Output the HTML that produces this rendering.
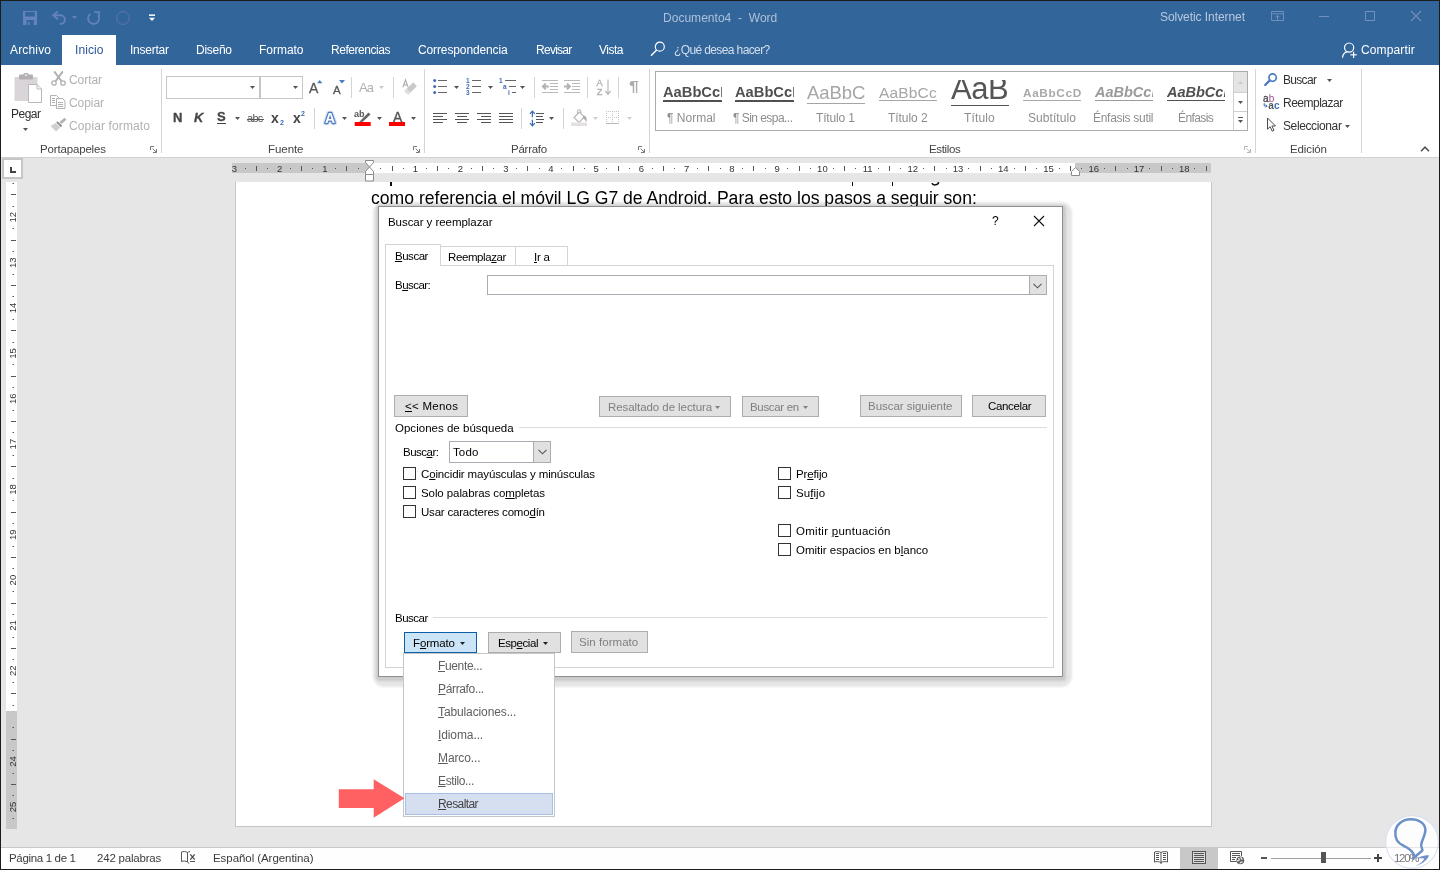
<!DOCTYPE html>
<html><head><meta charset="utf-8"><title>Documento4 - Word</title>
<style>
html,body{margin:0;padding:0;}
body{width:1440px;height:870px;overflow:hidden;position:relative;background:#e6e6e6;font-family:"Liberation Sans",sans-serif;}
.a{position:absolute;display:block;}
.t{position:absolute;white-space:pre;display:block;will-change:transform;}
u{text-decoration:underline;text-underline-offset:1px;text-decoration-thickness:1px;}
svg{overflow:visible;will-change:transform;}
</style></head><body>
<div class="a" style="left:0px;top:0px;width:1440px;height:870px;background:#e6e6e6;"></div>
<div class="a" style="left:0px;top:0px;width:1440px;height:65px;background:#32659a;"></div>
<div class="a" style="left:0px;top:65px;width:1440px;height:92px;background:#fff;"></div>
<div class="a" style="left:0px;top:157px;width:1440px;height:1px;background:#d2d2d2;"></div>
<div class="a" style="left:62px;top:35px;width:54px;height:30px;background:#fff;"></div>
<svg class="a" style="left:23px;top:11px;" width="14" height="14" viewBox="0 0 14 14"><path fill-rule="evenodd" d="M0.6 0 H13.4 Q14 0 14 0.6 V13.4 Q14 14 13.4 14 H0.6 Q0 14 0 13.4 V0.6 Q0 0 0.6 0 Z M2.2 1 V5.6 H11.8 V1 Z M3.6 9 V14 H10.8 V9 Z" fill="#6482bc"/><rect x="5" y="11" width="1.6" height="3" fill="#6482bc"/></svg>
<svg class="a" style="left:52px;top:11px;" width="15" height="14" viewBox="0 0 15 14"><path d="M2 4.3 H8.6 A4.3 4.3 0 0 1 8.6 12.9 H7.6" fill="none" stroke="#6482bc" stroke-width="1.9"/><path d="M5.9 0.4 L1.2 4.3 L5.9 8.2" fill="none" stroke="#6482bc" stroke-width="1.9"/></svg>
<svg class="a" style="left:71.0px;top:15.0px;" width="7" height="5" viewBox="0 0 7 5"><path d="M1 1 L6 1 L3.5 4 Z" fill="#6482bc"/></svg>
<svg class="a" style="left:87px;top:11px;" width="14" height="14" viewBox="0 0 14 14"><path d="M3.4 2.9 A5.5 5.5 0 1 0 11.2 4.4" fill="none" stroke="#6482bc" stroke-width="1.8"/><path d="M7.2 1.2 H12 V5.8" fill="none" stroke="#6482bc" stroke-width="1.8"/></svg>
<svg class="a" style="left:116px;top:11px;" width="14" height="14" viewBox="0 0 14 14"><circle cx="7" cy="7" r="6.4" fill="none" stroke="#6475b8" stroke-width="0.9"/></svg>
<svg class="a" style="left:148.5px;top:14px;" width="6" height="8" viewBox="0 0 6 8"><rect x="0" y="0.4" width="6" height="1.5" fill="#fff"/><path d="M0 3.7 H6 L3 7 Z" fill="#fff"/></svg>
<span class="t" style="left:662.50px;top:10.34px;font-size:12px;line-height:17px;color:#aec0d9;letter-spacing:0.026px;">Documento4  -  Word</span>
<span class="t" style="left:1160.00px;top:9.34px;font-size:12px;line-height:17px;color:#b9c9de;letter-spacing:-0.065px;">Solvetic Internet</span>
<svg class="a" style="left:1271px;top:11px;" width="13" height="10" viewBox="0 0 13 10"><path d="M0.5 0.5 H12.5 V9.5 H0.5 Z M0.5 2.8 H12.5" fill="none" stroke="#6f8fbc" stroke-width="1"/><path d="M6.5 9.5 V4.3 M4.5 6.3 L6.5 4.3 L8.5 6.3" fill="none" stroke="#6f8fbc" stroke-width="1"/></svg>
<div class="a" style="left:1319px;top:16px;width:10px;height:1px;background:#6f8fbc;"></div>
<div class="a" style="left:1365px;top:11px;width:10px;height:10px;border:1px solid #6f8fbc;box-sizing:border-box;"></div>
<svg class="a" style="left:1411px;top:11px;" width="10" height="10" viewBox="0 0 10 10"><path d="M0 0 L10 10 M10 0 L0 10" stroke="#6f8fbc" stroke-width="1.1"/></svg>
<span class="t" style="left:10.00px;top:42.34px;font-size:12px;line-height:17px;color:#fff;letter-spacing:0.164px;">Archivo</span>
<span class="t" style="left:74.50px;top:42.34px;font-size:12px;line-height:17px;color:#2b579a;letter-spacing:0.097px;">Inicio</span>
<span class="t" style="left:130.00px;top:42.34px;font-size:12px;line-height:17px;color:#fff;letter-spacing:-0.240px;">Insertar</span>
<span class="t" style="left:196.00px;top:42.34px;font-size:12px;line-height:17px;color:#fff;letter-spacing:-0.271px;">Diseño</span>
<span class="t" style="left:259.30px;top:42.34px;font-size:12px;line-height:17px;color:#fff;letter-spacing:-0.030px;">Formato</span>
<span class="t" style="left:331.30px;top:42.34px;font-size:12px;line-height:17px;color:#fff;letter-spacing:-0.453px;">Referencias</span>
<span class="t" style="left:418.30px;top:42.34px;font-size:12px;line-height:17px;color:#fff;letter-spacing:-0.121px;">Correspondencia</span>
<span class="t" style="left:535.50px;top:42.34px;font-size:12px;line-height:17px;color:#fff;letter-spacing:-0.729px;">Revisar</span>
<span class="t" style="left:599.30px;top:42.34px;font-size:12px;line-height:17px;color:#fff;letter-spacing:-0.490px;">Vista</span>
<svg class="a" style="left:650px;top:42px;" width="16" height="14" viewBox="0 0 16 14"><circle cx="9.8" cy="4.7" r="4.5" fill="none" stroke="#fff" stroke-width="1.2"/><path d="M6.6 8 L1 13.8" stroke="#fff" stroke-width="1.4"/></svg>
<span class="t" style="left:673.80px;top:42.34px;font-size:12px;line-height:17px;color:#d5dfee;letter-spacing:-0.617px;">¿Qué desea hacer?</span>
<svg class="a" style="left:1342px;top:42px;" width="16" height="16" viewBox="0 0 16 16"><circle cx="7.1" cy="5.6" r="4.6" fill="none" stroke="#fff" stroke-width="1.2"/><path d="M0.5 15.8 C0.9 12.2 3 10.2 5.4 9.7" fill="none" stroke="#fff" stroke-width="1.2"/><rect x="11" y="9.7" width="1.2" height="6.3" fill="#fff"/><rect x="8.5" y="12.2" width="6.3" height="1.2" fill="#fff"/></svg>
<span class="t" style="left:1361.30px;top:42.34px;font-size:12px;line-height:17px;color:#fff;letter-spacing:0.128px;">Compartir</span>
<div class="a" style="left:161px;top:69px;width:1px;height:84px;background:#d4d4d4;"></div>
<div class="a" style="left:424px;top:69px;width:1px;height:84px;background:#d4d4d4;"></div>
<div class="a" style="left:649px;top:69px;width:1px;height:84px;background:#d4d4d4;"></div>
<div class="a" style="left:1255px;top:69px;width:1px;height:84px;background:#d4d4d4;"></div>
<div class="a" style="left:1361px;top:69px;width:1px;height:84px;background:#d4d4d4;"></div>
<span class="t" style="left:39.50px;top:141.02px;font-size:11.5px;line-height:16px;color:#444;letter-spacing:-0.161px;">Portapapeles</span>
<span class="t" style="left:267.50px;top:141.02px;font-size:11.5px;line-height:16px;color:#444;letter-spacing:-0.060px;">Fuente</span>
<span class="t" style="left:510.50px;top:141.02px;font-size:11.5px;line-height:16px;color:#444;letter-spacing:-0.252px;">Párrafo</span>
<span class="t" style="left:928.70px;top:141.02px;font-size:11.5px;line-height:16px;color:#444;letter-spacing:-0.345px;">Estilos</span>
<span class="t" style="left:1289.70px;top:141.02px;font-size:11.5px;line-height:16px;color:#444;letter-spacing:-0.119px;">Edición</span>
<svg class="a" style="left:150px;top:146px;" width="7" height="7" viewBox="0 0 7 7"><path d="M0.5 4 V0.5 H4" fill="none" stroke="#777" stroke-width="1"/><path d="M2.6 2.6 L6 6 M6.5 3 V6.5 H3" fill="none" stroke="#777" stroke-width="1"/></svg>
<svg class="a" style="left:413px;top:146px;" width="7" height="7" viewBox="0 0 7 7"><path d="M0.5 4 V0.5 H4" fill="none" stroke="#777" stroke-width="1"/><path d="M2.6 2.6 L6 6 M6.5 3 V6.5 H3" fill="none" stroke="#777" stroke-width="1"/></svg>
<svg class="a" style="left:638px;top:146px;" width="7" height="7" viewBox="0 0 7 7"><path d="M0.5 4 V0.5 H4" fill="none" stroke="#777" stroke-width="1"/><path d="M2.6 2.6 L6 6 M6.5 3 V6.5 H3" fill="none" stroke="#777" stroke-width="1"/></svg>
<svg class="a" style="left:1244px;top:146px;" width="7" height="7" viewBox="0 0 7 7"><path d="M0.5 4 V0.5 H4" fill="none" stroke="#b5b5b5" stroke-width="1"/><path d="M2.6 2.6 L6 6 M6.5 3 V6.5 H3" fill="none" stroke="#b5b5b5" stroke-width="1"/></svg>
<svg class="a" style="left:1420px;top:146px;" width="10" height="6" viewBox="0 0 10 6"><path d="M1 5.2 L5 1.2 L9 5.2" fill="none" stroke="#555" stroke-width="1.6"/></svg>
<svg class="a" style="left:14px;top:73px;" width="28" height="30" viewBox="0 0 28 30">
<rect x="0.5" y="4" width="23" height="24" rx="1" fill="#d9d5d9"/>
<rect x="5" y="1.5" width="14" height="5" rx="1" fill="#b3afb3"/>
<rect x="9.5" y="0" width="5" height="3.5" rx="1.2" fill="#b3afb3"/>
<rect x="10.8" y="1.2" width="2.4" height="1.6" fill="#e9e6e9"/>
<path d="M14.5 11.5 H23 L27.5 16 V29.5 H14.5 Z" fill="#fff" stroke="#b9b9b9" stroke-width="1"/>
<path d="M23 11.5 V16 H27.5" fill="none" stroke="#b9b9b9" stroke-width="1"/>
</svg>
<span class="t" style="left:11.00px;top:106.34px;font-size:12px;line-height:17px;color:#2e2e2e;letter-spacing:-0.505px;">Pegar</span>
<svg class="a" style="left:22.0px;top:126.5px;" width="7" height="5" viewBox="0 0 7 5"><path d="M1 1 L6 1 L3.5 4 Z" fill="#555"/></svg>
<svg class="a" style="left:51px;top:71px;" width="15" height="15" viewBox="0 0 15 15">
<path d="M3.2 0.3 L10.3 10 M11.8 0.3 L4.7 10" stroke="#b1b1b1" stroke-width="2" fill="none"/>
<circle cx="3" cy="12" r="2.2" fill="none" stroke="#b1b1b1" stroke-width="1.3"/>
<circle cx="12" cy="12" r="2.2" fill="none" stroke="#b1b1b1" stroke-width="1.3"/></svg>
<span class="t" style="left:69.00px;top:72.34px;font-size:12px;line-height:17px;color:#b1b1b1;letter-spacing:-0.068px;">Cortar</span>
<svg class="a" style="left:50px;top:95px;" width="16" height="15" viewBox="0 0 16 15">
<path d="M0.5 0.5 H6.5 L9 3 V10.5 H0.5 Z" fill="#fff" stroke="#b1b1b1" stroke-width="1"/>
<path shape-rendering="crispEdges" d="M2 3.5 H5 M2 5.5 H5 M2 7.5 H5" stroke="#b1b1b1" stroke-width="1"/>
<path d="M6.5 3.5 H12.5 L15 6 V13.5 H6.5 Z" fill="#fff" stroke="#b1b1b1" stroke-width="1"/>
<path shape-rendering="crispEdges" d="M8 7.5 H13 M8 9.5 H13 M8 11.5 H13" stroke="#b1b1b1" stroke-width="1"/></svg>
<span class="t" style="left:69.00px;top:95.34px;font-size:12px;line-height:17px;color:#b1b1b1;letter-spacing:-0.070px;">Copiar</span>
<svg class="a" style="left:50px;top:117px;" width="17" height="15" viewBox="0 0 17 15">
<path d="M9.5 5 L14.5 0.8 L16.3 2.8 L11.5 7 Z" fill="#b1b1b1"/>
<path d="M7.6 4.2 L12.3 8.8 L10.8 10.2 L6.2 5.6 Z" fill="#8e8e8e"/>
<path d="M5.6 6 L10.2 10.6 L6 14.6 L0.6 9 Z" fill="#cfcfcf"/></svg>
<span class="t" style="left:69.00px;top:118.34px;font-size:12px;line-height:17px;color:#b1b1b1;letter-spacing:0.126px;">Copiar formato</span>
<div class="a" style="left:166px;top:76px;width:94px;height:23px;background:#fff;border:1px solid #c6c6c6;box-sizing:border-box;"></div>
<div class="a" style="left:260px;top:76px;width:43px;height:23px;background:#fff;border:1px solid #c6c6c6;box-sizing:border-box;"></div>
<svg class="a" style="left:249.0px;top:85.0px;" width="7" height="5" viewBox="0 0 7 5"><path d="M1 1 L6 1 L3.5 4 Z" fill="#555"/></svg>
<svg class="a" style="left:292.0px;top:85.0px;" width="7" height="5" viewBox="0 0 7 5"><path d="M1 1 L6 1 L3.5 4 Z" fill="#555"/></svg>
<span class="t" style="left:309.00px;top:78.15px;font-size:14px;line-height:20px;color:#555;letter-spacing:0.000px;-webkit-text-stroke:0.3px #555;">A</span>
<svg class="a" style="left:317px;top:80px;" width="6" height="3.5" viewBox="0 0 6 3.5"><path d="M0 3.2 L2.7 0 L5.4 3.2 Z" fill="#4a7ac0"/></svg>
<span class="t" style="left:332.50px;top:82.02px;font-size:11.5px;line-height:16px;color:#555;letter-spacing:0.000px;-webkit-text-stroke:0.3px #555;">A</span>
<svg class="a" style="left:338.5px;top:80px;" width="6" height="4" viewBox="0 0 6 4"><path d="M0 0 L6 0 L3 3.5 Z" fill="#4a7ac0"/></svg>
<div class="a" style="left:351px;top:77px;width:1px;height:21px;background:#d4d4d4;"></div>
<span class="t" style="left:359.00px;top:78.50px;font-size:13px;line-height:18px;color:#b1b1b1;letter-spacing:-0.901px;">Aa</span>
<svg class="a" style="left:378.2px;top:85.0px;" width="7" height="5" viewBox="0 0 7 5"><path d="M1 1 L6 1 L3.5 4 Z" fill="#c9c9c9"/></svg>
<div class="a" style="left:393px;top:77px;width:1px;height:21px;background:#d4d4d4;"></div>
<svg class="a" style="left:402px;top:79px;" width="16" height="16" viewBox="0 0 16 16">
<path d="M2.2 12.2 L11.3 3.2 L14.9 7.2 L6.3 15.4 Z" fill="#c9c9c9"/>
<path d="M2.2 12.2 L4.6 9.8 L8.7 13.2 L6.3 15.4 Z" fill="#dedede"/>
<path d="M0.9 8.4 L3.5 0.8 L6.1 8.4 M1.8 5.8 H5.2" fill="none" stroke="#b1b1b1" stroke-width="1.2"/></svg>
<span class="t" style="left:172.50px;top:108.50px;font-size:13px;line-height:18px;color:#444;letter-spacing:0.000px;font-weight:bold;-webkit-text-stroke:0.3px #444;">N</span>
<span class="t" style="left:194.00px;top:108.50px;font-size:13px;line-height:18px;color:#444;letter-spacing:0.000px;font-weight:bold;font-style:italic;-webkit-text-stroke:0.3px #444;">K</span>
<span class="t" style="left:217.00px;top:107.50px;font-size:13px;line-height:18px;color:#444;letter-spacing:0.000px;font-weight:bold;-webkit-text-stroke:0.3px #444;">S</span>
<div class="a" style="left:216.5px;top:123px;width:9px;height:1px;background:#444;"></div>
<svg class="a" style="left:233.5px;top:115.5px;" width="7" height="5" viewBox="0 0 7 5"><path d="M1 1 L6 1 L3.5 4 Z" fill="#555"/></svg>
<span class="t" style="left:247.00px;top:110.69px;font-size:11px;line-height:15px;color:#555;letter-spacing:-0.718px;">abc</span>
<div class="a" style="left:246.5px;top:118.5px;width:17.5px;height:1px;background:#555;"></div>
<span class="t" style="left:271.30px;top:108.15px;font-size:14px;line-height:20px;color:#444;letter-spacing:0.000px;font-weight:bold;">x</span>
<span class="t" style="left:279.50px;top:117.57px;font-size:7px;line-height:10px;color:#3b6cb5;letter-spacing:0.000px;font-weight:bold;">2</span>
<span class="t" style="left:293.00px;top:108.15px;font-size:14px;line-height:20px;color:#444;letter-spacing:0.000px;font-weight:bold;">x</span>
<span class="t" style="left:301.30px;top:108.57px;font-size:7px;line-height:10px;color:#3b6cb5;letter-spacing:0.000px;font-weight:bold;">2</span>
<div class="a" style="left:314px;top:108px;width:1px;height:21px;background:#d4d4d4;"></div>
<svg class="a" style="left:321px;top:109px;" width="18" height="17" viewBox="0 0 18 17"><text x="9" y="13.6" text-anchor="middle" font-family="Liberation Sans" font-size="14" font-weight="bold" fill="none" stroke="#d3dff3" stroke-width="4.6" stroke-linejoin="round">A</text>
<text x="9" y="13.6" text-anchor="middle" font-family="Liberation Sans" font-size="14" font-weight="bold" fill="#fff" stroke="#4a7ac0" stroke-width="2.3" stroke-linejoin="round" paint-order="stroke">A</text></svg>
<svg class="a" style="left:341.0px;top:115.5px;" width="7" height="5" viewBox="0 0 7 5"><path d="M1 1 L6 1 L3.5 4 Z" fill="#555"/></svg>
<svg class="a" style="left:354px;top:109px;" width="18" height="18" viewBox="0 0 18 18"><text x="0" y="8" font-family="Liberation Sans" font-size="9" font-weight="bold" fill="#555">ab</text>
<path d="M6.5 11.5 L14.5 3.5 L16.5 5.5 L8.5 13 Z" fill="#666"/><path d="M5 13.2 L6.5 11.5 L8.5 13 Z" fill="#666"/>
<rect x="0.7" y="13" width="16" height="4" fill="#ff0000"/></svg>
<svg class="a" style="left:375.5px;top:115.5px;" width="7" height="5" viewBox="0 0 7 5"><path d="M1 1 L6 1 L3.5 4 Z" fill="#555"/></svg>
<span class="t" style="left:392.50px;top:107.15px;font-size:14px;line-height:20px;color:#555;letter-spacing:0.000px;-webkit-text-stroke:0.35px #555;">A</span>
<div class="a" style="left:389px;top:122px;width:16px;height:4px;background:#ff0000;"></div>
<svg class="a" style="left:409.8px;top:115.5px;" width="7" height="5" viewBox="0 0 7 5"><path d="M1 1 L6 1 L3.5 4 Z" fill="#555"/></svg>
<svg class="a" style="left:433px;top:79px;" width="14" height="16" viewBox="0 0 14 16"><circle cx="1.7" cy="1.5" r="1.5" fill="#3f6db3"/><path shape-rendering="crispEdges" d="M5 1.5 H13.5" stroke="#666" stroke-width="1"/><circle cx="1.7" cy="7.5" r="1.5" fill="#3f6db3"/><path shape-rendering="crispEdges" d="M5 7.5 H13.5" stroke="#666" stroke-width="1"/><circle cx="1.7" cy="13.5" r="1.5" fill="#3f6db3"/><path shape-rendering="crispEdges" d="M5 13.5 H13.5" stroke="#666" stroke-width="1"/></svg>
<svg class="a" style="left:452.8px;top:85.0px;" width="7" height="5" viewBox="0 0 7 5"><path d="M1 1 L6 1 L3.5 4 Z" fill="#555"/></svg>
<svg class="a" style="left:466px;top:79px;" width="16" height="16" viewBox="0 0 16 16"><text x="0" y="3.8" font-family="Liberation Sans" font-size="6.5" font-weight="bold" fill="#3f6db3">1</text><path shape-rendering="crispEdges" d="M6 1.5 H15" stroke="#666" stroke-width="1"/><text x="0" y="9.8" font-family="Liberation Sans" font-size="6.5" font-weight="bold" fill="#3f6db3">2</text><path shape-rendering="crispEdges" d="M6 7.5 H15" stroke="#666" stroke-width="1"/><text x="0" y="15.8" font-family="Liberation Sans" font-size="6.5" font-weight="bold" fill="#3f6db3">3</text><path shape-rendering="crispEdges" d="M6 13.5 H15" stroke="#666" stroke-width="1"/></svg>
<svg class="a" style="left:486.8px;top:85.0px;" width="7" height="5" viewBox="0 0 7 5"><path d="M1 1 L6 1 L3.5 4 Z" fill="#555"/></svg>
<svg class="a" style="left:499px;top:79px;" width="18" height="16" viewBox="0 0 18 16"><text x="0" y="4.3" font-family="Liberation Sans" font-size="6.5" font-weight="bold" fill="#3f6db3">1</text><path shape-rendering="crispEdges" d="M5.5 1.5 H16.5" stroke="#666" stroke-width="1"/>
<text x="4" y="10.3" font-family="Liberation Sans" font-size="6.5" font-weight="bold" fill="#3f6db3">a</text><path shape-rendering="crispEdges" d="M10 7.5 H16.5" stroke="#666" stroke-width="1"/>
<text x="9" y="16" font-family="Liberation Sans" font-size="6.5" font-weight="bold" fill="#3f6db3">i</text><path shape-rendering="crispEdges" d="M13 13.5 H16.5" stroke="#666" stroke-width="1"/></svg>
<svg class="a" style="left:519.0px;top:85.0px;" width="7" height="5" viewBox="0 0 7 5"><path d="M1 1 L6 1 L3.5 4 Z" fill="#555"/></svg>
<div class="a" style="left:534px;top:77px;width:1px;height:21px;background:#d4d4d4;"></div>
<svg class="a" style="left:542px;top:79px;" width="16" height="16" viewBox="0 0 16 16"><path shape-rendering="crispEdges" d="M0 1.5 H16" stroke="#b9b9b9" stroke-width="1"/><path shape-rendering="crispEdges" d="M8 4.5 H16" stroke="#b9b9b9" stroke-width="1"/><path shape-rendering="crispEdges" d="M8 7.5 H16" stroke="#b9b9b9" stroke-width="1"/><path shape-rendering="crispEdges" d="M8 10.5 H16" stroke="#b9b9b9" stroke-width="1"/><path shape-rendering="crispEdges" d="M0 13.5 H16" stroke="#b9b9b9" stroke-width="1"/><path d="M6.8 7.5 H1.6 M3.8 4.6 L0.9 7.5 L3.8 10.4" fill="none" stroke="#b2b2b2" stroke-width="2"/></svg>
<svg class="a" style="left:564px;top:79px;" width="16" height="16" viewBox="0 0 16 16"><path shape-rendering="crispEdges" d="M0 1.5 H16" stroke="#b9b9b9" stroke-width="1"/><path shape-rendering="crispEdges" d="M8 4.5 H16" stroke="#b9b9b9" stroke-width="1"/><path shape-rendering="crispEdges" d="M8 7.5 H16" stroke="#b9b9b9" stroke-width="1"/><path shape-rendering="crispEdges" d="M8 10.5 H16" stroke="#b9b9b9" stroke-width="1"/><path shape-rendering="crispEdges" d="M0 13.5 H16" stroke="#b9b9b9" stroke-width="1"/><path d="M0 7.5 H5.2 M3 4.6 L5.9 7.5 L3 10.4" fill="none" stroke="#b2b2b2" stroke-width="2"/></svg>
<div class="a" style="left:587px;top:77px;width:1px;height:21px;background:#d4d4d4;"></div>
<svg class="a" style="left:596px;top:78px;" width="16" height="17" viewBox="0 0 16 17"><text x="0.4" y="8.3" font-family="Liberation Sans" font-size="9.3" fill="#b0b0b0" stroke="#b0b0b0" stroke-width="0.3">A</text><text x="0.7" y="16.8" font-family="Liberation Sans" font-size="9.3" fill="#b0b0b0" stroke="#b0b0b0" stroke-width="0.3">Z</text>
<path d="M12 1.5 V16 M9.3 13 L12 16.2 L14.7 13" fill="none" stroke="#b9b9b9" stroke-width="1.2"/></svg>
<div class="a" style="left:618px;top:77px;width:1px;height:21px;background:#d4d4d4;"></div>
<span class="t" style="left:629.00px;top:75.30px;font-size:15px;line-height:21px;color:#adadad;letter-spacing:0.000px;font-weight:bold;transform:scaleX(1.2);transform-origin:0 0;">¶</span>
<svg class="a" style="left:433px;top:113px;" width="14" height="12" viewBox="0 0 14 12"><path shape-rendering="crispEdges" d="M0 0.5 H14" stroke="#555" stroke-width="1"/><path shape-rendering="crispEdges" d="M0 3.5 H10" stroke="#555" stroke-width="1"/><path shape-rendering="crispEdges" d="M0 6.5 H14" stroke="#555" stroke-width="1"/><path shape-rendering="crispEdges" d="M0 9.5 H10" stroke="#555" stroke-width="1"/></svg>
<svg class="a" style="left:455px;top:113px;" width="14" height="12" viewBox="0 0 14 12"><path shape-rendering="crispEdges" d="M0 0.5 H14" stroke="#555" stroke-width="1"/><path shape-rendering="crispEdges" d="M2 3.5 H12" stroke="#555" stroke-width="1"/><path shape-rendering="crispEdges" d="M0 6.5 H14" stroke="#555" stroke-width="1"/><path shape-rendering="crispEdges" d="M2 9.5 H12" stroke="#555" stroke-width="1"/></svg>
<svg class="a" style="left:477px;top:113px;" width="14" height="12" viewBox="0 0 14 12"><path shape-rendering="crispEdges" d="M0 0.5 H14" stroke="#555" stroke-width="1"/><path shape-rendering="crispEdges" d="M4 3.5 H14" stroke="#555" stroke-width="1"/><path shape-rendering="crispEdges" d="M0 6.5 H14" stroke="#555" stroke-width="1"/><path shape-rendering="crispEdges" d="M4 9.5 H14" stroke="#555" stroke-width="1"/></svg>
<svg class="a" style="left:499px;top:113px;" width="14" height="12" viewBox="0 0 14 12"><path shape-rendering="crispEdges" d="M0 0.5 H14" stroke="#555" stroke-width="1"/><path shape-rendering="crispEdges" d="M0 3.5 H14" stroke="#555" stroke-width="1"/><path shape-rendering="crispEdges" d="M0 6.5 H14" stroke="#555" stroke-width="1"/><path shape-rendering="crispEdges" d="M0 9.5 H14" stroke="#555" stroke-width="1"/></svg>
<div class="a" style="left:521px;top:108px;width:1px;height:21px;background:#d4d4d4;"></div>
<svg class="a" style="left:529px;top:110px;" width="16" height="17" viewBox="0 0 16 17"><path d="M3.4 1.2 V7.3 M0.9 3.9 L3.4 1.2 L5.9 3.9 M3.4 9.7 V15.8 M0.9 13.1 L3.4 15.8 L5.9 13.1" fill="none" stroke="#3f6db3" stroke-width="1.25"/><path shape-rendering="crispEdges" d="M7 3.5 H15" stroke="#555" stroke-width="1"/><path shape-rendering="crispEdges" d="M7 6.5 H14" stroke="#555" stroke-width="1"/><path shape-rendering="crispEdges" d="M7 9.5 H15" stroke="#555" stroke-width="1"/><path shape-rendering="crispEdges" d="M7 12.5 H14" stroke="#555" stroke-width="1"/></svg>
<svg class="a" style="left:547.8px;top:115.5px;" width="7" height="5" viewBox="0 0 7 5"><path d="M1 1 L6 1 L3.5 4 Z" fill="#555"/></svg>
<div class="a" style="left:563px;top:108px;width:1px;height:21px;background:#d4d4d4;"></div>
<svg class="a" style="left:571px;top:109px;" width="17" height="17" viewBox="0 0 17 17"><path d="M3 8.5 L8.5 3 L13.5 8 L8 13.5 Z" fill="#fff" stroke="#b9b9b9" stroke-width="1.2"/>
<path d="M6.5 5 V2.5 A1.7 1.7 0 0 1 10 2.5 V4.3" fill="none" stroke="#b9b9b9" stroke-width="1.1"/>
<path d="M12.8 6.6 C16 7.6 16.3 10.8 15.2 13 C14.3 11 13.6 10 11.6 9 Z" fill="#adadad"/>
<rect x="0" y="13.5" width="16" height="3.5" fill="#e3dfe3"/></svg>
<svg class="a" style="left:592.0px;top:115.5px;" width="7" height="5" viewBox="0 0 7 5"><path d="M1 1 L6 1 L3.5 4 Z" fill="#cfcfcf"/></svg>
<svg class="a" style="left:606px;top:111px;" width="13" height="13" viewBox="0 0 13 13"><g shape-rendering="crispEdges"><path d="M0.5 0 V12 M6.5 0 V12 M12.5 0 V12 M0 0.5 H13 M0 6.5 H13" fill="none" stroke="#c4c4c4" stroke-width="1" stroke-dasharray="1 1"/><path d="M0 12.5 H13" stroke="#b9b9b9" stroke-width="1"/></g></svg>
<svg class="a" style="left:626.0px;top:115.5px;" width="7" height="5" viewBox="0 0 7 5"><path d="M1 1 L6 1 L3.5 4 Z" fill="#cfcfcf"/></svg>
<div class="a" style="left:655px;top:71px;width:593px;height:60px;background:#fff;border:1px solid #ababab;box-sizing:border-box;"></div>
<div class="a" style="left:1233px;top:72px;width:1px;height:58px;background:#d0d0d0;"></div>
<div class="a" style="left:1234px;top:72px;width:13px;height:20px;background:#e4e4e4;"></div>
<div class="a" style="left:1234px;top:92px;width:13px;height:1px;background:#d0d0d0;"></div>
<div class="a" style="left:1234px;top:111px;width:13px;height:1px;background:#d0d0d0;"></div>
<svg class="a" style="left:1238px;top:81px;" width="5" height="3" viewBox="0 0 5 3"><path d="M0 3 L2.5 0 L5 3 Z" fill="#c9c9c9"/></svg>
<svg class="a" style="left:1237.0px;top:100.0px;" width="7" height="5" viewBox="0 0 7 5"><path d="M1 1 L6 1 L3.5 4 Z" fill="#555"/></svg>
<div class="a" style="left:1238px;top:117px;width:5px;height:1px;background:#555;"></div>
<svg class="a" style="left:1237.0px;top:119.0px;" width="7" height="5" viewBox="0 0 7 5"><path d="M1 1 L6 1 L3.5 4 Z" fill="#555"/></svg>
<span class="t" style="left:663.00px;top:83.41px;font-size:14.7px;line-height:19px;color:#505050;letter-spacing:0.000px;font-weight:bold;width:59.3px;overflow:hidden;">AaBbCcD</span>
<div class="a" style="left:663px;top:100px;width:59px;height:1.5px;background:#505050;"></div>
<span class="t" style="left:735.00px;top:83.41px;font-size:14.7px;line-height:19px;color:#505050;letter-spacing:0.000px;font-weight:bold;width:59.3px;overflow:hidden;">AaBbCcD</span>
<div class="a" style="left:735px;top:100px;width:59px;height:1.5px;background:#505050;"></div>
<span class="t" style="left:807.00px;top:81.29px;font-size:18.5px;line-height:24px;color:#a6a6a6;letter-spacing:-0.080px;">AaBbC</span>
<div class="a" style="left:807px;top:103px;width:58px;height:1px;background:#a6a6a6;"></div>
<span class="t" style="left:879.00px;top:82.63px;font-size:15.5px;line-height:20px;color:#a6a6a6;letter-spacing:0.168px;">AaBbCc</span>
<div class="a" style="left:879px;top:100px;width:58px;height:1px;background:#a6a6a6;"></div>
<div class="a" style="left:945px;top:80px;width:70px;height:30px;overflow:hidden;">
<span class="t" style="left:6.3px;top:-11.04px;font-size:31px;line-height:40px;color:#555;letter-spacing:-0.45px;">AaB</span>
</div>
<div class="a" style="left:951px;top:105px;width:58px;height:1px;background:#555;"></div>
<span class="t" style="left:1023.00px;top:85.91px;font-size:11.8px;line-height:15px;color:#a9a9a9;letter-spacing:0.630px;font-weight:bold;">AaBbCcD</span>
<div class="a" style="left:1023px;top:100px;width:58px;height:1px;background:#a9a9a9;"></div>
<span class="t" style="left:1095.30px;top:83.48px;font-size:14.5px;line-height:19px;color:#9a9a9a;letter-spacing:0.000px;font-weight:bold;font-style:italic;width:58px;overflow:hidden;">AaBbCcD</span>
<div class="a" style="left:1095.3px;top:99.5px;width:58px;height:1.5px;background:#9a9a9a;"></div>
<span class="t" style="left:1167.00px;top:83.48px;font-size:14.5px;line-height:19px;color:#505050;letter-spacing:0.000px;font-weight:bold;font-style:italic;width:58px;overflow:hidden;">AaBbCcD</span>
<div class="a" style="left:1167px;top:99.5px;width:58px;height:1.5px;background:#505050;"></div>
<span class="t" style="left:667.00px;top:110.34px;font-size:12px;line-height:17px;color:#8d8d8d;letter-spacing:0.007px;">¶ Normal</span>
<span class="t" style="left:733.30px;top:110.34px;font-size:12px;line-height:17px;color:#8d8d8d;letter-spacing:-0.540px;">¶ Sin espa...</span>
<span class="t" style="left:816.00px;top:110.34px;font-size:12px;line-height:17px;color:#8d8d8d;letter-spacing:-0.146px;">Título 1</span>
<span class="t" style="left:888.30px;top:110.34px;font-size:12px;line-height:17px;color:#8d8d8d;letter-spacing:-0.046px;">Título 2</span>
<span class="t" style="left:964.00px;top:110.34px;font-size:12px;line-height:17px;color:#8d8d8d;letter-spacing:0.138px;">Título</span>
<span class="t" style="left:1028.00px;top:110.34px;font-size:12px;line-height:17px;color:#8d8d8d;letter-spacing:0.054px;">Subtítulo</span>
<span class="t" style="left:1093.30px;top:110.34px;font-size:12px;line-height:17px;color:#8d8d8d;letter-spacing:-0.294px;">Énfasis sutil</span>
<span class="t" style="left:1178.30px;top:110.34px;font-size:12px;line-height:17px;color:#8d8d8d;letter-spacing:-0.609px;">Énfasis</span>
<svg class="a" style="left:1264px;top:73px;" width="14" height="13" viewBox="0 0 14 13"><circle cx="8.6" cy="4.6" r="3.7" fill="#fff" stroke="#4a7ac0" stroke-width="1.7"/><path d="M5.8 7.4 L1.2 12" stroke="#4a7ac0" stroke-width="2.2" stroke-linecap="round"/></svg>
<span class="t" style="left:1282.80px;top:72.34px;font-size:12px;line-height:17px;color:#333;letter-spacing:-0.690px;">Buscar</span>
<svg class="a" style="left:1326.0px;top:77.5px;" width="7" height="5" viewBox="0 0 7 5"><path d="M1 1 L6 1 L3.5 4 Z" fill="#555"/></svg>
<svg class="a" style="left:1263px;top:95px;" width="17" height="15" viewBox="0 0 17 15"><text x="0" y="6.5" font-family="Liberation Sans" font-size="10" fill="#444" stroke="#444" stroke-width="0.3">a</text><text x="5.7" y="6.5" font-family="Liberation Sans" font-size="10" fill="#9b4f96">b</text>
<text x="5.3" y="14.2" font-family="Liberation Sans" font-size="10" font-weight="bold" fill="#555">a</text><text x="11" y="14.2" font-family="Liberation Sans" font-size="10" font-weight="bold" fill="#3f6db3">c</text>
<path d="M1.2 8.2 V11 H4 M2.6 9.6 L4.2 11 L2.6 12.4" fill="none" stroke="#3f6db3" stroke-width="1"/></svg>
<span class="t" style="left:1282.80px;top:95.34px;font-size:12px;line-height:17px;color:#333;letter-spacing:-0.499px;">Reemplazar</span>
<svg class="a" style="left:1266px;top:117px;" width="11" height="15" viewBox="0 0 11 15"><path d="M1.5 1 V12.2 L4.1 9.7 L6.2 14.2 L8 13.3 L5.9 9 H9.5 Z" fill="#fff" stroke="#4a4a4a" stroke-width="1" stroke-linejoin="miter"/></svg>
<span class="t" style="left:1282.80px;top:118.34px;font-size:12px;line-height:17px;color:#333;letter-spacing:-0.380px;">Seleccionar</span>
<svg class="a" style="left:1344.0px;top:123.5px;" width="7" height="5" viewBox="0 0 7 5"><path d="M1 1 L6 1 L3.5 4 Z" fill="#555"/></svg>
<div class="a" style="left:2px;top:158px;width:21px;height:21px;background:#c6c6c6;"></div>
<div class="a" style="left:4px;top:160px;width:17px;height:17px;background:#fff;"></div>
<svg class="a" style="left:10px;top:167px;" width="6" height="6" viewBox="0 0 6 6"><path d="M1 0 V5 H6" fill="none" stroke="#444" stroke-width="2"/></svg>
<div class="a" style="left:232px;top:163px;width:979px;height:10px;background:#c8c8c8;"></div>
<div class="a" style="left:369px;top:163px;width:706px;height:10px;background:#fff;"></div>
<svg class="a" style="left:232px;top:163px;" width="979" height="11" viewBox="0 0 979 11"><text x="2.4" y="9.2" text-anchor="middle" font-family="Liberation Sans" font-size="9.5" fill="#333">3</text><rect x="13" y="5" width="1" height="1" fill="#555"/><rect x="24" y="3" width="1" height="5" fill="#555"/><rect x="35" y="5" width="1" height="1" fill="#555"/><text x="47.6" y="9.2" text-anchor="middle" font-family="Liberation Sans" font-size="9.5" fill="#333">2</text><rect x="58" y="5" width="1" height="1" fill="#555"/><rect x="69" y="3" width="1" height="5" fill="#555"/><rect x="80" y="5" width="1" height="1" fill="#555"/><text x="92.8" y="9.2" text-anchor="middle" font-family="Liberation Sans" font-size="9.5" fill="#333">1</text><rect x="103" y="5" width="1" height="1" fill="#555"/><rect x="114" y="3" width="1" height="5" fill="#555"/><rect x="126" y="5" width="1" height="1" fill="#555"/><rect x="148" y="5" width="1" height="1" fill="#555"/><rect x="160" y="3" width="1" height="5" fill="#555"/><rect x="171" y="5" width="1" height="1" fill="#555"/><text x="183.3" y="9.2" text-anchor="middle" font-family="Liberation Sans" font-size="9.5" fill="#333">1</text><rect x="194" y="5" width="1" height="1" fill="#555"/><rect x="205" y="3" width="1" height="5" fill="#555"/><rect x="216" y="5" width="1" height="1" fill="#555"/><text x="228.5" y="9.2" text-anchor="middle" font-family="Liberation Sans" font-size="9.5" fill="#333">2</text><rect x="239" y="5" width="1" height="1" fill="#555"/><rect x="250" y="3" width="1" height="5" fill="#555"/><rect x="261" y="5" width="1" height="1" fill="#555"/><text x="273.8" y="9.2" text-anchor="middle" font-family="Liberation Sans" font-size="9.5" fill="#333">3</text><rect x="284" y="5" width="1" height="1" fill="#555"/><rect x="295" y="3" width="1" height="5" fill="#555"/><rect x="307" y="5" width="1" height="1" fill="#555"/><text x="319.0" y="9.2" text-anchor="middle" font-family="Liberation Sans" font-size="9.5" fill="#333">4</text><rect x="329" y="5" width="1" height="1" fill="#555"/><rect x="341" y="3" width="1" height="5" fill="#555"/><rect x="352" y="5" width="1" height="1" fill="#555"/><text x="364.2" y="9.2" text-anchor="middle" font-family="Liberation Sans" font-size="9.5" fill="#333">5</text><rect x="374" y="5" width="1" height="1" fill="#555"/><rect x="386" y="3" width="1" height="5" fill="#555"/><rect x="397" y="5" width="1" height="1" fill="#555"/><text x="409.5" y="9.2" text-anchor="middle" font-family="Liberation Sans" font-size="9.5" fill="#333">6</text><rect x="420" y="5" width="1" height="1" fill="#555"/><rect x="431" y="3" width="1" height="5" fill="#555"/><rect x="442" y="5" width="1" height="1" fill="#555"/><text x="454.7" y="9.2" text-anchor="middle" font-family="Liberation Sans" font-size="9.5" fill="#333">7</text><rect x="465" y="5" width="1" height="1" fill="#555"/><rect x="476" y="3" width="1" height="5" fill="#555"/><rect x="488" y="5" width="1" height="1" fill="#555"/><text x="499.9" y="9.2" text-anchor="middle" font-family="Liberation Sans" font-size="9.5" fill="#333">8</text><rect x="510" y="5" width="1" height="1" fill="#555"/><rect x="521" y="3" width="1" height="5" fill="#555"/><rect x="533" y="5" width="1" height="1" fill="#555"/><text x="545.1" y="9.2" text-anchor="middle" font-family="Liberation Sans" font-size="9.5" fill="#333">9</text><rect x="555" y="5" width="1" height="1" fill="#555"/><rect x="567" y="3" width="1" height="5" fill="#555"/><rect x="578" y="5" width="1" height="1" fill="#555"/><text x="590.4" y="9.2" text-anchor="middle" font-family="Liberation Sans" font-size="9.5" fill="#333">10</text><rect x="601" y="5" width="1" height="1" fill="#555"/><rect x="612" y="3" width="1" height="5" fill="#555"/><rect x="623" y="5" width="1" height="1" fill="#555"/><text x="635.6" y="9.2" text-anchor="middle" font-family="Liberation Sans" font-size="9.5" fill="#333">11</text><rect x="646" y="5" width="1" height="1" fill="#555"/><rect x="657" y="3" width="1" height="5" fill="#555"/><rect x="668" y="5" width="1" height="1" fill="#555"/><text x="680.8" y="9.2" text-anchor="middle" font-family="Liberation Sans" font-size="9.5" fill="#333">12</text><rect x="691" y="5" width="1" height="1" fill="#555"/><rect x="702" y="3" width="1" height="5" fill="#555"/><rect x="714" y="5" width="1" height="1" fill="#555"/><text x="726.1" y="9.2" text-anchor="middle" font-family="Liberation Sans" font-size="9.5" fill="#333">13</text><rect x="736" y="5" width="1" height="1" fill="#555"/><rect x="748" y="3" width="1" height="5" fill="#555"/><rect x="759" y="5" width="1" height="1" fill="#555"/><text x="771.3" y="9.2" text-anchor="middle" font-family="Liberation Sans" font-size="9.5" fill="#333">14</text><rect x="782" y="5" width="1" height="1" fill="#555"/><rect x="793" y="3" width="1" height="5" fill="#555"/><rect x="804" y="5" width="1" height="1" fill="#555"/><text x="816.5" y="9.2" text-anchor="middle" font-family="Liberation Sans" font-size="9.5" fill="#333">15</text><rect x="827" y="5" width="1" height="1" fill="#555"/><rect x="838" y="3" width="1" height="5" fill="#555"/><rect x="849" y="5" width="1" height="1" fill="#555"/><text x="861.8" y="9.2" text-anchor="middle" font-family="Liberation Sans" font-size="9.5" fill="#333">16</text><rect x="872" y="5" width="1" height="1" fill="#555"/><rect x="883" y="3" width="1" height="5" fill="#555"/><rect x="895" y="5" width="1" height="1" fill="#555"/><text x="907.0" y="9.2" text-anchor="middle" font-family="Liberation Sans" font-size="9.5" fill="#333">17</text><rect x="917" y="5" width="1" height="1" fill="#555"/><rect x="929" y="3" width="1" height="5" fill="#555"/><rect x="940" y="5" width="1" height="1" fill="#555"/><text x="952.2" y="9.2" text-anchor="middle" font-family="Liberation Sans" font-size="9.5" fill="#333">18</text><rect x="962" y="5" width="1" height="1" fill="#555"/><rect x="974" y="3" width="1" height="5" fill="#555"/></svg>
<svg class="a" style="left:365px;top:160px;" width="9" height="22" viewBox="0 0 9 22"><path d="M0.5 0.5 H8.5 V2.5 L4.5 7 L8.5 11.5 V14.5 H0.5 V11.5 L4.5 7 L0.5 2.5 Z" fill="#fff" stroke="#8a8a8a" stroke-width="1"/><path d="M0.5 14.5 H8.5 V21 H0.5 Z" fill="#fff" stroke="#8a8a8a" stroke-width="1"/></svg>
<svg class="a" style="left:1071px;top:167px;" width="9" height="9" viewBox="0 0 9 9"><path d="M0.5 8.5 V4.5 L4.5 0.6 L8.5 4.5 V8.5 Z" fill="#fff" stroke="#8a8a8a" stroke-width="1"/></svg>
<div class="a" style="left:6px;top:182px;width:11px;height:647px;background:#fff;"></div>
<div class="a" style="left:6px;top:711px;width:11px;height:118px;background:#c8c8c8;"></div>
<svg class="a" style="left:6px;top:182px;" width="11" height="647" viewBox="0 0 11 647"><rect x="6.5" y="1" width="1.5" height="1" fill="#555"/><rect x="5" y="12" width="5" height="1" fill="#555"/><rect x="6.5" y="24" width="1.5" height="1" fill="#555"/><text transform="translate(10.2 35.3) rotate(-90)" text-anchor="middle" font-family="Liberation Sans" font-size="9.5" fill="#333">12</text><rect x="6.5" y="46" width="1.5" height="1" fill="#555"/><rect x="5" y="58" width="5" height="1" fill="#555"/><rect x="6.5" y="69" width="1.5" height="1" fill="#555"/><text transform="translate(10.2 80.7) rotate(-90)" text-anchor="middle" font-family="Liberation Sans" font-size="9.5" fill="#333">13</text><rect x="6.5" y="92" width="1.5" height="1" fill="#555"/><rect x="5" y="103" width="5" height="1" fill="#555"/><rect x="6.5" y="114" width="1.5" height="1" fill="#555"/><text transform="translate(10.2 126.0) rotate(-90)" text-anchor="middle" font-family="Liberation Sans" font-size="9.5" fill="#333">14</text><rect x="6.5" y="137" width="1.5" height="1" fill="#555"/><rect x="5" y="148" width="5" height="1" fill="#555"/><rect x="6.5" y="160" width="1.5" height="1" fill="#555"/><text transform="translate(10.2 171.4) rotate(-90)" text-anchor="middle" font-family="Liberation Sans" font-size="9.5" fill="#333">15</text><rect x="6.5" y="182" width="1.5" height="1" fill="#555"/><rect x="5" y="194" width="5" height="1" fill="#555"/><rect x="6.5" y="205" width="1.5" height="1" fill="#555"/><text transform="translate(10.2 216.7) rotate(-90)" text-anchor="middle" font-family="Liberation Sans" font-size="9.5" fill="#333">16</text><rect x="6.5" y="228" width="1.5" height="1" fill="#555"/><rect x="5" y="239" width="5" height="1" fill="#555"/><rect x="6.5" y="250" width="1.5" height="1" fill="#555"/><text transform="translate(10.2 262.1) rotate(-90)" text-anchor="middle" font-family="Liberation Sans" font-size="9.5" fill="#333">17</text><rect x="6.5" y="273" width="1.5" height="1" fill="#555"/><rect x="5" y="284" width="5" height="1" fill="#555"/><rect x="6.5" y="296" width="1.5" height="1" fill="#555"/><text transform="translate(10.2 307.4) rotate(-90)" text-anchor="middle" font-family="Liberation Sans" font-size="9.5" fill="#333">18</text><rect x="6.5" y="318" width="1.5" height="1" fill="#555"/><rect x="5" y="330" width="5" height="1" fill="#555"/><rect x="6.5" y="341" width="1.5" height="1" fill="#555"/><text transform="translate(10.2 352.8) rotate(-90)" text-anchor="middle" font-family="Liberation Sans" font-size="9.5" fill="#333">19</text><rect x="6.5" y="364" width="1.5" height="1" fill="#555"/><rect x="5" y="375" width="5" height="1" fill="#555"/><rect x="6.5" y="386" width="1.5" height="1" fill="#555"/><text transform="translate(10.2 398.1) rotate(-90)" text-anchor="middle" font-family="Liberation Sans" font-size="9.5" fill="#333">20</text><rect x="6.5" y="409" width="1.5" height="1" fill="#555"/><rect x="5" y="421" width="5" height="1" fill="#555"/><rect x="6.5" y="432" width="1.5" height="1" fill="#555"/><text transform="translate(10.2 443.5) rotate(-90)" text-anchor="middle" font-family="Liberation Sans" font-size="9.5" fill="#333">21</text><rect x="6.5" y="455" width="1.5" height="1" fill="#555"/><rect x="5" y="466" width="5" height="1" fill="#555"/><rect x="6.5" y="477" width="1.5" height="1" fill="#555"/><text transform="translate(10.2 488.8) rotate(-90)" text-anchor="middle" font-family="Liberation Sans" font-size="9.5" fill="#333">22</text><rect x="6.5" y="500" width="1.5" height="1" fill="#555"/><rect x="5" y="511" width="5" height="1" fill="#555"/><rect x="6.5" y="523" width="1.5" height="1" fill="#555"/><rect x="6.5" y="545" width="1.5" height="1" fill="#555"/><rect x="5" y="557" width="5" height="1" fill="#555"/><rect x="6.5" y="568" width="1.5" height="1" fill="#555"/><text transform="translate(10.2 579.5) rotate(-90)" text-anchor="middle" font-family="Liberation Sans" font-size="9.5" fill="#333">24</text><rect x="6.5" y="591" width="1.5" height="1" fill="#555"/><rect x="5" y="602" width="5" height="1" fill="#555"/><rect x="6.5" y="613" width="1.5" height="1" fill="#555"/><text transform="translate(10.2 624.9) rotate(-90)" text-anchor="middle" font-family="Liberation Sans" font-size="9.5" fill="#333">25</text><rect x="6.5" y="636" width="1.5" height="1" fill="#555"/></svg>
<div class="a" style="left:235px;top:182px;width:977px;height:645px;background:#fff;border:1px solid #c6c6c6;box-sizing:border-box;border-top:none;"></div>
<div class="a" style="left:236px;top:180px;width:975px;height:3px;background:#fff;display:none;"></div>
<span class="t" style="left:371.20px;top:186.40px;font-size:17.6px;line-height:25px;color:#000;letter-spacing:-0.007px;">como referencia el móvil LG G7 de Android. Para esto los pasos a seguir son:</span>
<div class="a" style="left:390.2px;top:182px;width:1.6px;height:4px;background:#111;"></div>
<div class="a" style="left:851.7px;top:182px;width:1.6px;height:4px;background:#111;"></div>
<div class="a" style="left:891.7px;top:182px;width:1.6px;height:4px;background:#111;"></div>
<svg class="a" style="left:931px;top:182px;" width="9" height="5" viewBox="0 0 9 5"><path d="M1 1.2 C1.5 3.6 7.5 3.6 7.6 0" fill="none" stroke="#111" stroke-width="1.5"/></svg>
<div class="a" style="left:372.5px;top:201.5px;width:699.5px;height:485.5px;background:rgba(0,0,0,0.098);border-radius:11px;filter:blur(0.9px);"></div>
<div class="a" style="left:376px;top:204.5px;width:690px;height:476.5px;background:rgba(0,0,0,0.122);border-radius:3px;filter:blur(1.2px);"></div>
<div class="a" style="left:378px;top:206px;width:685px;height:471px;background:#fff;border:1px solid #8e8e8e;box-sizing:border-box;"></div>
<span class="t" style="left:387.50px;top:214.02px;font-size:11.5px;line-height:16px;color:#000;letter-spacing:-0.053px;">Buscar y reemplazar</span>
<span class="t" style="left:991.70px;top:213.34px;font-size:12px;line-height:17px;color:#000;letter-spacing:0.000px;">?</span>
<svg class="a" style="left:1034px;top:216px;" width="10" height="10" viewBox="0 0 10 10"><path d="M0 0 L10 10 M10 0 L0 10" stroke="#111" stroke-width="1.1"/></svg>
<div class="a" style="left:385px;top:265px;width:669px;height:403px;background:#fff;border:1px solid #d4d4d4;box-sizing:border-box;"></div>
<div class="a" style="left:440px;top:246px;width:76px;height:20px;background:#fff;border:1px solid #d4d4d4;box-sizing:border-box;"></div>
<div class="a" style="left:515px;top:246px;width:53px;height:20px;background:#fff;border:1px solid #d4d4d4;box-sizing:border-box;"></div>
<div class="a" style="left:385px;top:244px;width:56px;height:22px;background:#fff;border:1px solid #d4d4d4;box-sizing:border-box;border-bottom:none;"></div>
<div class="a" style="left:386px;top:265px;width:54px;height:1px;background:#fff;"></div>
<span class="t" style="left:395.30px;top:248.02px;font-size:11.5px;line-height:16px;color:#000;letter-spacing:-0.478px;"><u>B</u>uscar</span>
<span class="t" style="left:448.30px;top:249.02px;font-size:11.5px;line-height:16px;color:#000;letter-spacing:-0.400px;">Reempla<u>z</u>ar</span>
<span class="t" style="left:533.80px;top:249.02px;font-size:11.5px;line-height:16px;color:#000;letter-spacing:-0.239px;"><u>I</u>r a</span>
<span class="t" style="left:394.50px;top:277.02px;font-size:11.5px;line-height:16px;color:#000;letter-spacing:-0.531px;">B<u>u</u>scar:</span>
<div class="a" style="left:487px;top:275px;width:560px;height:20px;background:#fff;border:1px solid #a9acb2;box-sizing:border-box;"></div>
<div class="a" style="left:1029px;top:275px;width:18px;height:20px;background:#e1e1e1;border:1px solid #adadad;box-sizing:border-box;"></div>
<svg class="a" style="left:1033px;top:283px;" width="9" height="6" viewBox="0 0 9 6"><path d="M0.5 0.8 L4.5 4.8 L8.5 0.8" fill="none" stroke="#555" stroke-width="1.1"/></svg>
<div class="a" style="left:394px;top:395px;width:74px;height:22px;background:#e1e1e1;border:1px solid #adadad;box-sizing:border-box;"></div>
<span class="t" style="left:404.50px;top:398.02px;font-size:11.5px;line-height:16px;color:#000;letter-spacing:0.265px;"><u>&lt;</u>&lt; Menos</span>
<div class="a" style="left:599px;top:396px;width:132px;height:21px;background:#e1e1e1;border:1px solid #adadad;box-sizing:border-box;"></div>
<span class="t" style="left:607.50px;top:399.02px;font-size:11.5px;line-height:16px;color:#7f7f7f;letter-spacing:-0.067px;">Resaltado de lectura</span>
<svg class="a" style="left:714.0px;top:404.5px;" width="7" height="5" viewBox="0 0 7 5"><path d="M1 1 L6 1 L3.5 4 Z" fill="#7f7f7f"/></svg>
<div class="a" style="left:742px;top:396px;width:77px;height:21px;background:#e1e1e1;border:1px solid #adadad;box-sizing:border-box;"></div>
<span class="t" style="left:750.30px;top:399.02px;font-size:11.5px;line-height:16px;color:#7f7f7f;letter-spacing:-0.322px;">Buscar en</span>
<svg class="a" style="left:802.0px;top:404.5px;" width="7" height="5" viewBox="0 0 7 5"><path d="M1 1 L6 1 L3.5 4 Z" fill="#7f7f7f"/></svg>
<div class="a" style="left:860px;top:395px;width:102px;height:22px;background:#e1e1e1;border:1px solid #adadad;box-sizing:border-box;"></div>
<span class="t" style="left:868.30px;top:398.02px;font-size:11.5px;line-height:16px;color:#7f7f7f;letter-spacing:-0.035px;">Buscar siguiente</span>
<div class="a" style="left:972px;top:395px;width:74px;height:22px;background:#e1e1e1;border:1px solid #adadad;box-sizing:border-box;"></div>
<span class="t" style="left:987.50px;top:398.02px;font-size:11.5px;line-height:16px;color:#000;letter-spacing:-0.332px;">Cancelar</span>
<span class="t" style="left:394.70px;top:420.02px;font-size:11.5px;line-height:16px;color:#000;letter-spacing:0.017px;">Opciones de búsqueda</span>
<div class="a" style="left:519px;top:427px;width:528px;height:1px;background:#dcdcdc;"></div>
<span class="t" style="left:403.30px;top:444.02px;font-size:11.5px;line-height:16px;color:#000;letter-spacing:-0.515px;">Busc<u>a</u>r:</span>
<div class="a" style="left:449px;top:441px;width:102px;height:22px;background:#fff;border:1px solid #a9acb2;box-sizing:border-box;"></div>
<div class="a" style="left:533px;top:441px;width:18px;height:22px;background:#e1e1e1;border:1px solid #adadad;box-sizing:border-box;"></div>
<svg class="a" style="left:538px;top:449px;" width="9" height="6" viewBox="0 0 9 6"><path d="M0.5 0.8 L4.5 4.8 L8.5 0.8" fill="none" stroke="#555" stroke-width="1.1"/></svg>
<span class="t" style="left:453.00px;top:444.02px;font-size:11.5px;line-height:16px;color:#000;letter-spacing:0.121px;">Todo</span>
<div class="a" style="left:403px;top:467px;width:13px;height:13px;background:#fff;border:1px solid #333;box-sizing:border-box;"></div>
<span class="t" style="left:420.50px;top:466.02px;font-size:11.5px;line-height:16px;color:#000;letter-spacing:-0.135px;">C<u>o</u>incidir mayúsculas y minúsculas</span>
<div class="a" style="left:403px;top:486px;width:13px;height:13px;background:#fff;border:1px solid #333;box-sizing:border-box;"></div>
<span class="t" style="left:420.50px;top:485.02px;font-size:11.5px;line-height:16px;color:#000;letter-spacing:-0.088px;">Solo palabras co<u>m</u>pletas</span>
<div class="a" style="left:403px;top:505px;width:13px;height:13px;background:#fff;border:1px solid #333;box-sizing:border-box;"></div>
<span class="t" style="left:420.50px;top:504.02px;font-size:11.5px;line-height:16px;color:#000;letter-spacing:-0.203px;">Usar caracteres como<u>d</u>ín</span>
<div class="a" style="left:778px;top:467px;width:13px;height:13px;background:#fff;border:1px solid #333;box-sizing:border-box;"></div>
<span class="t" style="left:795.50px;top:466.02px;font-size:11.5px;line-height:16px;color:#000;letter-spacing:-0.149px;">Pr<u>e</u>fijo</span>
<div class="a" style="left:778px;top:486px;width:13px;height:13px;background:#fff;border:1px solid #333;box-sizing:border-box;"></div>
<span class="t" style="left:795.50px;top:485.02px;font-size:11.5px;line-height:16px;color:#000;letter-spacing:0.047px;">Su<u>f</u>ijo</span>
<div class="a" style="left:778px;top:524px;width:13px;height:13px;background:#fff;border:1px solid #333;box-sizing:border-box;"></div>
<span class="t" style="left:795.50px;top:523.02px;font-size:11.5px;line-height:16px;color:#000;letter-spacing:0.273px;">Omitir <u>p</u>untuación</span>
<div class="a" style="left:778px;top:543px;width:13px;height:13px;background:#fff;border:1px solid #333;box-sizing:border-box;"></div>
<span class="t" style="left:795.50px;top:542.02px;font-size:11.5px;line-height:16px;color:#000;letter-spacing:-0.005px;">Omitir espacios en b<u>l</u>anco</span>
<span class="t" style="left:394.70px;top:610.02px;font-size:11.5px;line-height:16px;color:#000;letter-spacing:-0.498px;">Buscar</span>
<div class="a" style="left:433px;top:617px;width:614px;height:1px;background:#dcdcdc;"></div>
<div class="a" style="left:404px;top:632px;width:73px;height:21px;background:#cce4f7;border:1px solid #0c5fa6;box-sizing:border-box;"></div>
<span class="t" style="left:413.30px;top:635.02px;font-size:11.5px;line-height:16px;color:#000;letter-spacing:-0.136px;">F<u>o</u>rmato</span>
<svg class="a" style="left:459.0px;top:640.5px;" width="7" height="5" viewBox="0 0 7 5"><path d="M1 1 L6 1 L3.5 4 Z" fill="#222"/></svg>
<div class="a" style="left:488px;top:632px;width:73px;height:21px;background:#e1e1e1;border:1px solid #adadad;box-sizing:border-box;"></div>
<span class="t" style="left:498.30px;top:635.02px;font-size:11.5px;line-height:16px;color:#000;letter-spacing:-0.424px;">Esp<u>e</u>cial</span>
<svg class="a" style="left:541.8px;top:640.5px;" width="7" height="5" viewBox="0 0 7 5"><path d="M1 1 L6 1 L3.5 4 Z" fill="#222"/></svg>
<div class="a" style="left:571px;top:631px;width:77px;height:22px;background:#e1e1e1;border:1px solid #adadad;box-sizing:border-box;"></div>
<span class="t" style="left:579.30px;top:634.02px;font-size:11.5px;line-height:16px;color:#7f7f7f;letter-spacing:0.040px;">Sin formato</span>
<div class="a" style="left:403px;top:653px;width:152px;height:164px;background:#fff;border:1px solid #c6c6c6;box-sizing:border-box;"></div>
<span class="t" style="left:438.30px;top:658.34px;font-size:12px;line-height:17px;color:#5f5f5f;letter-spacing:-0.358px;"><u>F</u>uente...</span>
<span class="t" style="left:438.30px;top:681.34px;font-size:12px;line-height:17px;color:#5f5f5f;letter-spacing:-0.350px;"><u>P</u>árrafo...</span>
<span class="t" style="left:438.30px;top:704.34px;font-size:12px;line-height:17px;color:#5f5f5f;letter-spacing:-0.118px;"><u>T</u>abulaciones...</span>
<span class="t" style="left:438.30px;top:727.34px;font-size:12px;line-height:17px;color:#5f5f5f;letter-spacing:-0.102px;"><u>I</u>dioma...</span>
<span class="t" style="left:438.30px;top:750.34px;font-size:12px;line-height:17px;color:#5f5f5f;letter-spacing:-0.120px;"><u>M</u>arco...</span>
<span class="t" style="left:438.30px;top:773.34px;font-size:12px;line-height:17px;color:#5f5f5f;letter-spacing:-0.393px;"><u>E</u>stilo...</span>
<div class="a" style="left:405px;top:793px;width:148px;height:22px;background:#d5dff0;border:1px solid #a6c0e6;box-sizing:border-box;"></div>
<span class="t" style="left:438.30px;top:796.34px;font-size:12px;line-height:17px;color:#444;letter-spacing:-0.598px;"><u>R</u>esaltar</span>
<svg class="a" style="left:338px;top:779px;" width="68" height="40" viewBox="0 0 68 40"><path d="M0.8 10.2 H35.7 V0.2 L66.5 19.3 L35.7 38.8 V29 H0.8 Z" fill="#ff6163"/></svg>
<div class="a" style="left:0px;top:847px;width:1440px;height:1px;background:#c9c9c9;"></div>
<div class="a" style="left:0px;top:848px;width:1440px;height:22px;background:#fefefe;"></div>
<span class="t" style="left:8.80px;top:850.02px;font-size:11.5px;line-height:16px;color:#3c3c3c;letter-spacing:-0.331px;">Página 1 de 1</span>
<span class="t" style="left:97.00px;top:850.02px;font-size:11.5px;line-height:16px;color:#3c3c3c;letter-spacing:-0.199px;">242 palabras</span>
<svg class="a" style="left:181px;top:851px;" width="15" height="13" viewBox="0 0 15 13"><path d="M6.5 1.5 C4.5 0.3 2.5 0.3 0.5 1 V10.5 C2.5 9.8 4.5 9.8 6.5 11 M6.5 1.5 V11 M6.5 1.5 C7 1 8 0.7 9 0.6" fill="none" stroke="#555" stroke-width="1"/><path d="M6.5 11 L8.3 12.7" stroke="#555" stroke-width="1"/><path d="M9.3 3.3 L13.7 8.7 M13.7 3.3 L9.3 8.7" stroke="#444" stroke-width="1.2"/><path d="M9 10.5 H14" stroke="#555" stroke-width="1"/></svg>
<span class="t" style="left:213.30px;top:850.02px;font-size:11.5px;line-height:16px;color:#3c3c3c;letter-spacing:-0.063px;">Español (Argentina)</span>
<div class="a" style="left:1180px;top:848px;width:38px;height:21px;background:#c8c8c8;"></div>
<svg class="a" style="left:1154px;top:851px;" width="14" height="13" viewBox="0 0 14 13"><path d="M7 1.5 C5 0.4 2.5 0.4 0.5 1 V11 C2.5 10.4 5 10.4 7 11.5 C9 10.4 11.5 10.4 13.5 11 V1 C11.5 0.4 9 0.4 7 1.5 Z M7 1.5 V13" fill="none" stroke="#555" stroke-width="1"/><path shape-rendering="crispEdges" d="M2 2.5 H5 M2 4.5 H5 M2 6.5 H5 M2 8.5 H5 M9 2.5 H12 M9 4.5 H12 M9 6.5 H12 M9 8.5 H12" stroke="#555" stroke-width="1"/></svg>
<svg class="a" style="left:1192px;top:851px;" width="14" height="13" viewBox="0 0 14 13"><g shape-rendering="crispEdges"><rect x="0.5" y="0.5" width="13" height="12" fill="#dadada" stroke="#555" stroke-width="1"/><path d="M2 2.5 H12 M2 4.5 H12 M2 6.5 H12 M2 8.5 H12 M2 10.5 H12" stroke="#555" stroke-width="1"/></g></svg>
<svg class="a" style="left:1230px;top:851px;" width="15" height="14" viewBox="0 0 15 14"><path d="M6.5 10.5 H0.5 V0.5 H11.5 V5" fill="none" stroke="#555" stroke-width="1"/><path shape-rendering="crispEdges" d="M2 2.5 H10 M2 4.5 H10 M2 6.5 H6 M2 8.5 H5" stroke="#555" stroke-width="1"/><circle cx="10.3" cy="9.3" r="3.9" fill="#5f5f5f"/><path d="M8.3 7.2 C9.3 7.6 9.6 8.6 8.9 9.4 C8.3 10 7.6 10 7 9.6 M11 6 C10.6 7.2 11.5 8.2 12.6 8.2 M10 12.6 C10 11.4 11.2 10.6 12.6 11.2" fill="none" stroke="#fff" stroke-width="1.1"/></svg>
<div class="a" style="left:1261px;top:857px;width:6px;height:2px;background:#555;"></div>
<div class="a" style="left:1271px;top:858px;width:100px;height:1px;background:#a0a0a0;"></div>
<div class="a" style="left:1321px;top:852px;width:5px;height:11px;background:#555;"></div>
<div class="a" style="left:1374px;top:857px;width:8px;height:2px;background:#444;"></div>
<div class="a" style="left:1377px;top:854px;width:2px;height:8px;background:#444;"></div>
<svg class="a" style="left:1385px;top:815px;" width="54" height="54" viewBox="0 0 54 54"><circle cx="27" cy="27" r="26.3" fill="rgba(255,255,255,0.9)" stroke="rgba(214,224,240,0.9)" stroke-width="1.2"/></svg>
<div class="a" style="left:1387px;top:847px;width:50px;height:1px;background:rgba(190,190,190,0.3);"></div>
<span class="t" style="left:1393.70px;top:850.02px;font-size:11.5px;line-height:16px;color:#777;letter-spacing:-1.304px;">120%</span>
<svg class="a" style="left:1385px;top:815px;" width="54" height="54" viewBox="0 0 54 54"><path d="M29.3 41 C27.5 34.5 22.5 32.6 19 31 C13 28.3 9.6 23 10.4 16.5 C11.2 9.5 17.5 4.4 25.5 4.3 C33.5 4.1 40 8.3 40.4 14.5 C40.7 19.5 37 24.5 36.2 29.5 C35.8 32.5 37.8 34 37.4 35.6 C35 37.5 31.5 40 28.2 43.8"
 fill="none" stroke="#6e90c9" stroke-width="2.5" stroke-linecap="round" stroke-linejoin="round"/>
<path d="M32.5 43.2 C37.5 40.6 41.8 39.8 44 40.6 C42 46.2 36 49.5 30.3 51.3 C35.5 48.6 38.6 46 39.3 43.6 C37.2 43 34.8 43.4 32.5 43.2 Z" fill="#6e90c9"/></svg>
<div class="a" style="left:0px;top:0px;width:1440px;height:1px;background:#1c1c1c;"></div>
<div class="a" style="left:0px;top:0px;width:1px;height:870px;background:#1c1c1c;"></div>
<div class="a" style="left:1439px;top:0px;width:1px;height:870px;background:#1c1c1c;"></div>
<div class="a" style="left:0px;top:869px;width:1440px;height:1px;background:#1c1c1c;"></div>
</body></html>
